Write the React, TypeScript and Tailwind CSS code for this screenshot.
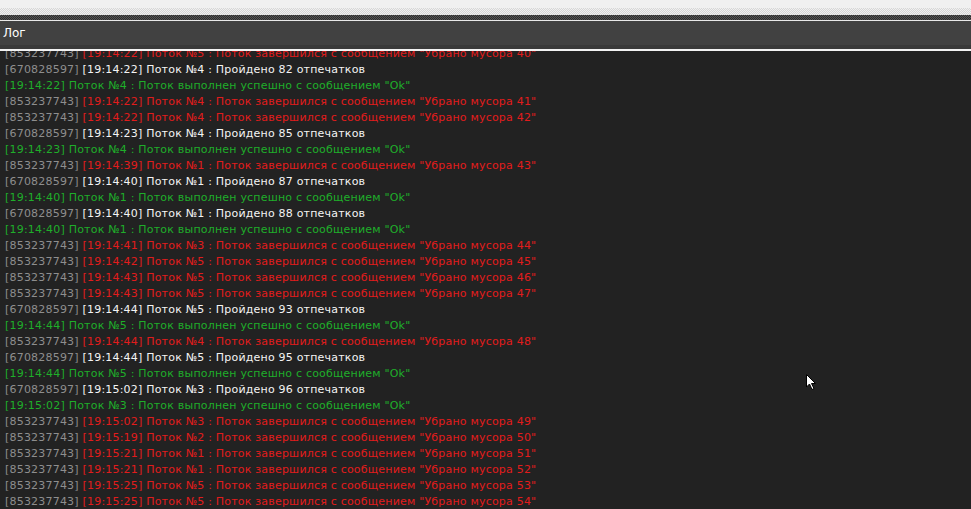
import React from "react";

type Kind = "info" | "ok" | "warn";

type LogLine = {
  kind: Kind;
  time: string;
  thread: number;
  extra?: string;
};

const INFO_ID = "[670828597]";
const WARN_ID = "[853237743]";

const lines: LogLine[] = [
  { kind: "warn", time: "19:14:22", thread: 5, extra: "40" },
  { kind: "info", time: "19:14:22", thread: 4, extra: "82" },
  { kind: "ok", time: "19:14:22", thread: 4 },
  { kind: "warn", time: "19:14:22", thread: 4, extra: "41" },
  { kind: "warn", time: "19:14:22", thread: 4, extra: "42" },
  { kind: "info", time: "19:14:23", thread: 4, extra: "85" },
  { kind: "ok", time: "19:14:23", thread: 4 },
  { kind: "warn", time: "19:14:39", thread: 1, extra: "43" },
  { kind: "info", time: "19:14:40", thread: 1, extra: "87" },
  { kind: "ok", time: "19:14:40", thread: 1 },
  { kind: "info", time: "19:14:40", thread: 1, extra: "88" },
  { kind: "ok", time: "19:14:40", thread: 1 },
  { kind: "warn", time: "19:14:41", thread: 3, extra: "44" },
  { kind: "warn", time: "19:14:42", thread: 5, extra: "45" },
  { kind: "warn", time: "19:14:43", thread: 5, extra: "46" },
  { kind: "warn", time: "19:14:43", thread: 5, extra: "47" },
  { kind: "info", time: "19:14:44", thread: 5, extra: "93" },
  { kind: "ok", time: "19:14:44", thread: 5 },
  { kind: "warn", time: "19:14:44", thread: 4, extra: "48" },
  { kind: "info", time: "19:14:44", thread: 5, extra: "95" },
  { kind: "ok", time: "19:14:44", thread: 5 },
  { kind: "info", time: "19:15:02", thread: 3, extra: "96" },
  { kind: "ok", time: "19:15:02", thread: 3 },
  { kind: "warn", time: "19:15:02", thread: 3, extra: "49" },
  { kind: "warn", time: "19:15:19", thread: 2, extra: "50" },
  { kind: "warn", time: "19:15:21", thread: 1, extra: "51" },
  { kind: "warn", time: "19:15:21", thread: 1, extra: "52" },
  { kind: "warn", time: "19:15:25", thread: 5, extra: "53" },
  { kind: "warn", time: "19:15:25", thread: 5, extra: "54" },
];

function Line({ line }: { line: LogLine }) {
  if (line.kind === "ok") {
    return (
      <div className="text-[#1fae2a]">
        [{line.time}] Поток №{line.thread} : Поток выполнен успешно с сообщением "Ok"
      </div>
    );
  }
  if (line.kind === "info") {
    return (
      <div>
        <span className="text-[#8e8e8e]">{INFO_ID}</span>{" "}
        <span className="text-[#f4f4f4]">
          [{line.time}] Поток №{line.thread} : Пройдено {line.extra} отпечатков
        </span>
      </div>
    );
  }
  return (
    <div>
      <span className="text-[#8e8e8e]">{WARN_ID}</span>{" "}
      <span className="text-[#e21c1c]">
        [{line.time}] Поток №{line.thread} : Поток завершился с сообщением "Убрано мусора {line.extra}"
      </span>
    </div>
  );
}

export default function App() {
  return (
    <div className="relative flex h-[509px] w-[971px] flex-col overflow-hidden bg-[#222222] font-['DejaVu_Sans',sans-serif]">
      {/* window chrome above the panel */}
      <div className="h-[8px] shrink-0 bg-[#f0f0f0]" />
      <div className="h-[7px] shrink-0 bg-[conic-gradient(#d6d6d6_25%,#f0f0f0_0_50%,#d6d6d6_0_75%,#f0f0f0_0)] bg-[length:2px_2px]" />
      <div className="h-[5px] shrink-0 bg-[conic-gradient(#2e2e2e_25%,#555555_0_50%,#2e2e2e_0_75%,#555555_0)] bg-[length:2px_2px]" />
      <div className="h-px shrink-0 bg-[#e8e8e8]" />

      {/* panel header */}
      <div className="flex h-[24px] shrink-0 items-center bg-[#414141] px-[3px] text-[12px] text-white">
        Лог
      </div>
      <div className="h-[4px] shrink-0 bg-[#393939]" />
      <div className="h-[2px] shrink-0 bg-[#f2f2f2]" />

      {/* log output, scrolled so the first line is partly hidden */}
      <div className="min-h-0 flex-1 overflow-hidden">
        <div className="-mt-[5px] pl-[5px] text-[11px] leading-[16px] tracking-[0.2px] whitespace-pre">
          {lines.map((l, i) => (
            <Line key={i} line={l} />
          ))}
        </div>
      </div>

      {/* mouse cursor */}
      <svg
        className="absolute left-[806px] top-[374px]"
        width="10"
        height="16"
        viewBox="0 0 10 16"
      >
        <path d="M0.5 0.5 L0.5 13 L3.5 10 L6 15.5 L8 14.5 L5.5 9.5 L9.5 9.5 Z" fill="#ffffff" stroke="#000000" strokeWidth="1" />
      </svg>
    </div>
  );
}
